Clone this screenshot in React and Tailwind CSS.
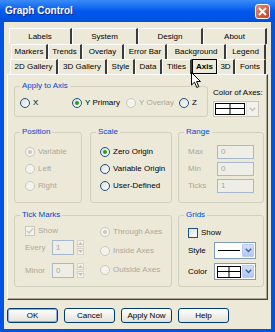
import React from 'react';

const tabRows = [
  { cls: 'h-[16px] ml-[5px]', tabs: [['Labels', 'w-[63px]'], ['System', 'w-[66px]'], ['Design', 'w-[65px]'], ['About', 'w-[64px]']] },
  { cls: 'h-[15px] ml-[7px]', tabs: [['Markers', 'w-[37px]'], ['Trends', 'w-[34px]'], ['Overlay', 'w-[42px]'], ['Error Bar', 'w-[43px]'], ['Background', 'w-[59px]'], ['Legend', 'w-[40px]']] },
  { cls: 'h-[15px] ml-[6px]', tabs: [['2D Gallery', 'w-[48px]'], ['3D Gallery', 'w-[49px]'], ['Style', 'w-[28px]'], ['Data', 'w-[27px]'], ['Titles', 'w-[30px]'], ['Axis', 'w-[25px]', true], ['3D', 'w-[18px]'], ['Fonts', 'w-[31px]']] },
];

function Tab({ label, w, active }) {
  if (active) {
    return (
      <div className={`${w} h-full flex items-center justify-center border border-black font-bold bg-[#ECE9D8]`}>
        {label}
      </div>
    );
  }
  return (
    <div className={`${w} h-full flex items-center justify-center border-l border-t border-l-white border-t-white border-r-2 border-r-[#3c3c3c]`}>
      {label}
    </div>
  );
}

function Radio({ checked, disabled, label, cls = '' }) {
  return (
    <div className={`flex items-center gap-[3px] ${cls} ${disabled ? 'text-[#ACA899]' : ''}`}>
      <span
        className={`w-[10px] h-[10px] shrink-0 rounded-full border flex items-center justify-center ${
          disabled ? 'border-[#CAC8BB] bg-[#F4F3EE]' : 'border-[#1C5180] bg-gradient-to-br from-[#DCDCD7] to-white'
        }`}
      >
        {checked && <span className={`w-[4px] h-[4px] rounded-full ${disabled ? 'bg-[#CAC8BB]' : 'bg-[#21A121]'}`} />}
      </span>
      <span>{label}</span>
    </div>
  );
}

function Check({ checked, disabled, label, cls = '' }) {
  return (
    <div className={`flex items-center gap-[3px] ${cls} ${disabled ? 'text-[#ACA899]' : ''}`}>
      <span
        className={`w-[10px] h-[10px] shrink-0 border flex items-center justify-center ${
          disabled ? 'border-[#CAC8BB] bg-[#F4F3EE]' : 'border-[#1C5180] bg-gradient-to-br from-[#DCDCD7] to-white'
        }`}
      >
        {checked && (
          <svg width="8" height="8" viewBox="0 0 8 8">
            <path d="M1 4 L3 6 L7 1.5" fill="none" stroke={disabled ? '#CAC8BB' : '#21A121'} strokeWidth="1.5" />
          </svg>
        )}
      </span>
      <span>{label}</span>
    </div>
  );
}

function Group({ title, cls, children }) {
  return (
    <fieldset className={`border border-[#D0D0BF] rounded-[3px] ${cls}`}>
      <legend className="ml-[5px] px-[2px] text-[#0046D5] leading-[10px]">{title}</legend>
      {children}
    </fieldset>
  );
}

function TextBox({ value, w }) {
  return (
    <div className={`${w} h-full border border-[#A7B8CC] bg-[#EEEDE6] text-[#ACA899] flex items-center pl-[3px]`}>
      {value}
    </div>
  );
}

function Spinner() {
  return (
    <div className="ml-[3px] flex flex-col gap-[1px]">
      <div className="w-[7px] h-[7px] border border-[#D6D4C9] bg-[#F3F2EC] flex items-center justify-center">
        <svg width="5" height="3" viewBox="0 0 5 3"><path d="M0 3 L2.5 0 L5 3 Z" fill="#C4C2B6" /></svg>
      </div>
      <div className="w-[7px] h-[7px] border border-[#D6D4C9] bg-[#F3F2EC] flex items-center justify-center">
        <svg width="5" height="3" viewBox="0 0 5 3"><path d="M0 0 L2.5 3 L5 0 Z" fill="#C4C2B6" /></svg>
      </div>
    </div>
  );
}

function GridSwatch({ w = 30 }) {
  return (
    <svg width={w} height="12" viewBox={`0 0 ${w} 12`}>
      <rect x="0.5" y="0.5" width={w - 1} height="11" fill="white" stroke="black" />
      <line x1="0" y1="5.5" x2={w} y2="5.5" stroke="black" />
      <line x1={w / 2} y1="0" x2={w / 2} y2="12" stroke="black" />
    </svg>
  );
}

function DropButton({ disabled }) {
  return (
    <div
      className={`w-[12px] h-full flex items-center justify-center ${
        disabled ? 'bg-[#F2F1EB] border-l border-[#E0DED4]' : 'bg-gradient-to-b from-[#D2DFFB] to-[#AFC6F6] border border-[#B9CBF3] rounded-[1px]'
      }`}
    >
      <svg width="7" height="5" viewBox="0 0 7 5">
        <path d="M0.8 0.8 L3.5 3.6 L6.2 0.8" fill="none" stroke={disabled ? '#C4C2B6' : '#4D6185'} strokeWidth="1.4" />
      </svg>
    </div>
  );
}

function Button({ label, def }) {
  return (
    <div
      className={`w-[51px] h-[15px] rounded-[3px] border border-[#003C74] bg-gradient-to-b from-white to-[#E3E1D8] flex items-center justify-center ${
        def ? 'shadow-[inset_0_0_0_1px_#8CAAE6]' : ''
      }`}
    >
      {label}
    </div>
  );
}

export default function App() {
  return (
    <div className="relative w-[275px] h-[332px] flex flex-col bg-[#0054E3] font-['Liberation_Sans',Arial,sans-serif] text-[8px] leading-[10px] text-black overflow-hidden">
      {/* title bar */}
      <div className="h-[22px] shrink-0 flex items-center justify-between pl-[5px] pr-[5px] bg-gradient-to-b from-[#3A8CF7] via-[#0058EE] to-[#0050DC]">
        <span className="text-white font-bold text-[10px] leading-[12px] [text-shadow:1px_1px_0_#0A2A8C]">Graph Control</span>
        <div className="w-[15px] h-[15px] rounded-[3px] border border-white bg-gradient-to-br from-[#E98A6C] to-[#C4381A] flex items-center justify-center">
          <svg width="9" height="9" viewBox="0 0 9 9">
            <path d="M1 1 L8 8 M8 1 L1 8" stroke="white" strokeWidth="1.8" />
          </svg>
        </div>
      </div>

      {/* body */}
      <div className="flex-1 mx-[4px] mb-[3px] bg-[#ECE9D8] flex flex-col pt-[6px]">
        {tabRows.map((row, i) => (
          <div key={i} className={`flex ${row.cls}`}>
            {row.tabs.map(([label, w, active]) => (
              <Tab key={label} label={label} w={w} active={active} />
            ))}
          </div>
        ))}

        {/* panel */}
        <div className="ml-[3px] w-[261px] h-[226px] border-t border-l border-t-white border-l-white border-r border-b border-r-[#404040] border-b-[#404040] shadow-[inset_-1px_-1px_0_#ACA899] pt-[6px] pl-[6px]">
          <div className="flex items-start">
            <Group title="Apply to Axis" cls="w-[194px] h-[36px]">
              <div className="flex items-center h-[17px] mt-[3px] pl-[5px]">
                <Radio label="X" cls="w-[52px]" />
                <Radio label="Y Primary" checked cls="w-[54px]" />
                <Radio label="Y Overlay" disabled cls="w-[53px]" />
                <Radio label="Z" />
              </div>
            </Group>
            <div className="ml-[5px] mt-[7px] flex flex-col">
              <span>Color of Axes:</span>
              <div className="mt-[3px] w-[46px] h-[16px] flex border border-[#C9C7BA] bg-white">
                <div className="flex-1 flex items-center justify-center">
                  <GridSwatch w={30} />
                </div>
                <DropButton disabled />
              </div>
            </div>
          </div>

          <div className="flex items-start mt-[10px]">
            <Group title="Position" cls="w-[68px] h-[76px]">
              <div className="mt-[6px] pl-[10px] flex flex-col">
                <Radio label="Variable" checked disabled cls="h-[17px]" />
                <Radio label="Left" disabled cls="h-[17px]" />
                <Radio label="Right" disabled cls="h-[17px]" />
              </div>
            </Group>
            <Group title="Scale" cls="ml-[8px] w-[82px] h-[76px]">
              <div className="mt-[6px] pl-[9px] flex flex-col">
                <Radio label="Zero Origin" checked cls="h-[17px]" />
                <Radio label="Variable Origin" cls="h-[17px]" />
                <Radio label="User-Defined" cls="h-[17px]" />
              </div>
            </Group>
            <Group title="Range" cls="ml-[6px] w-[86px] h-[76px]">
              <div className="mt-[8px] pl-[9px] flex flex-col gap-[3px] text-[#ACA899]">
                {[['Max', '0'], ['Min', '0'], ['Ticks', '1']].map(([l, v]) => (
                  <div key={l} className="flex items-center h-[14px]">
                    <span className="w-[29px]">{l}</span>
                    <TextBox value={v} w="w-[37px]" />
                  </div>
                ))}
              </div>
            </Group>
          </div>

          <div className="flex items-start mt-[7px]">
            <Group title="Tick Marks" cls="w-[158px] h-[77px]">
              <div className="flex">
                <div className="w-[85px] pl-[10px] flex flex-col">
                  <Check label="Show" checked disabled cls="h-[17px] mt-[2px]" />
                  <div className="flex items-center h-[15px] mt-[1px] text-[#ACA899]">
                    <span className="w-[27px]">Every</span>
                    <TextBox value="1" w="w-[22px]" />
                    <Spinner />
                  </div>
                  <div className="flex items-center h-[15px] mt-[8px] text-[#ACA899]">
                    <span className="w-[27px]">Minor</span>
                    <TextBox value="0" w="w-[22px]" />
                    <Spinner />
                  </div>
                </div>
                <div className="flex flex-col mt-[2px]">
                  <Radio label="Through Axes" checked disabled cls="h-[19px]" />
                  <Radio label="Inside Axes" disabled cls="h-[19px]" />
                  <Radio label="Outside Axes" disabled cls="h-[19px]" />
                </div>
              </div>
            </Group>
            <Group title="Grids" cls="ml-[6px] w-[86px] h-[77px]">
              <div className="pl-[9px] flex flex-col">
                <Check label="Show" cls="h-[17px] mt-[4px]" />
                <div className="flex items-center h-[17px] mt-[1px]">
                  <span className="w-[26px]">Style</span>
                  <div className="w-[42px] h-full flex border border-[#7F9DB9] bg-white p-[1px]">
                    <div className="flex-1 flex items-center justify-center">
                      <div className="w-[22px] h-[1px] bg-black" />
                    </div>
                    <DropButton />
                  </div>
                </div>
                <div className="flex items-center h-[17px] mt-[4px]">
                  <span className="w-[26px]">Color</span>
                  <div className="w-[42px] h-full flex border border-[#7F9DB9] bg-white p-[1px]">
                    <div className="flex-1 flex items-center justify-center">
                      <GridSwatch w={24} />
                    </div>
                    <DropButton />
                  </div>
                </div>
              </div>
            </Group>
          </div>
        </div>

        {/* buttons */}
        <div className="flex ml-[3px] mt-[8px] gap-[6px]">
          <Button label="OK" def />
          <Button label="Cancel" />
          <Button label="Apply Now" />
          <Button label="Help" />
        </div>
      </div>

      {/* mouse pointer */}
      <svg className="absolute left-[191px] top-[72px] z-10" width="11" height="17" viewBox="0 0 11 17">
        <path d="M0.5 0.5 L0.5 13 L3.5 10.2 L5.8 15.5 L7.8 14.6 L5.6 9.5 L9.5 9.5 Z" fill="white" stroke="black" strokeWidth="1" />
      </svg>
    </div>
  );
}
